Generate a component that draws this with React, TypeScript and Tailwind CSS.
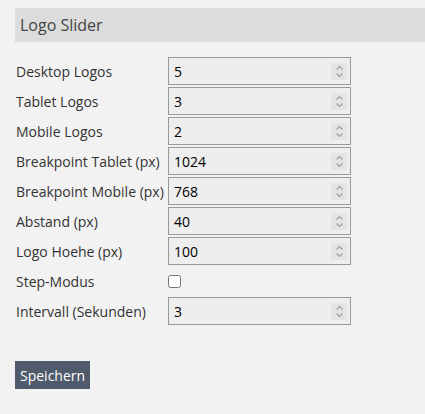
import { useState } from "react";

const fields = [
  { label: "Desktop Logos", value: "5" },
  { label: "Tablet Logos", value: "3" },
  { label: "Mobile Logos", value: "2" },
  { label: "Breakpoint Tablet (px)", value: "1024" },
  { label: "Breakpoint Mobile (px)", value: "768" },
  { label: "Abstand (px)", value: "40" },
  { label: "Logo Hoehe (px)", value: "100" },
];

// Firefox-artiger Spinner, da headless Chromium keinen zeigt
function Spinner() {
  return (
    <div className="absolute right-[4px] top-[6px] w-[16px] h-[17px] bg-[#e4e4e4] flex items-center justify-center pointer-events-none">
      <svg width="9" height="13" viewBox="0 0 9 13" fill="none" stroke="#a0a0a0" strokeWidth="1.2">
        <path d="M1.5 4.5 L4.5 1.5 L7.5 4.5" />
        <path d="M1.5 8.5 L4.5 11.5 L7.5 8.5" />
      </svg>
    </div>
  );
}

function NumberInput({ value }: { value: string }) {
  const [v, setV] = useState(value);
  return (
    <div className="relative h-[28px] w-[183px]">
      <input
        type="number"
        value={v}
        onChange={(e) => setV(e.target.value)}
        className="h-full w-full border border-[#999] bg-[#eeeeee] pl-[5px] pr-6 text-[14px] text-black outline-none [appearance:textfield] [&::-webkit-inner-spin-button]:appearance-none [&::-webkit-outer-spin-button]:appearance-none"
        style={{ fontFamily: "'Open Sans', sans-serif" }}
      />
      <Spinner />
    </div>
  );
}

export default function App() {
  const [step, setStep] = useState(false);

  return (
    <div
      className="min-h-screen w-full bg-[#f2f2f2] pt-[8px] pl-[15px] text-[14px] text-[#333]"
      style={{ fontFamily: "'Open Sans', sans-serif" }}
    >
      {/* Kopfzeile */}
      <div className="h-[34px] bg-[#dcdcdc] flex items-center pl-[5px] text-[16px] text-[#444]">
        Logo Slider
      </div>

      <div className="mt-[15px] grid grid-cols-[153px_183px] gap-y-[2px] items-center">
        {fields.map((f) => (
          <div key={f.label} className="contents">
            <label className="flex items-center h-[28px] pl-px">{f.label}</label>
            <NumberInput value={f.value} />
          </div>
        ))}

        <label className="flex items-center h-[28px] pl-px">Step-Modus</label>
        <div className="h-[28px] flex items-center">
          <input
            type="checkbox"
            checked={step}
            onChange={(e) => setStep(e.target.checked)}
            className="w-[13px] h-[13px] m-0"
          />
        </div>

        <label className="flex items-center h-[28px] pl-px">Intervall (Sekunden)</label>
        <NumberInput value="3" />
      </div>

      <button className="mt-[36px] h-[28px] px-[5px] bg-[#4f5a6b] text-white text-[14px]">
        Speichern
      </button>
    </div>
  );
}
